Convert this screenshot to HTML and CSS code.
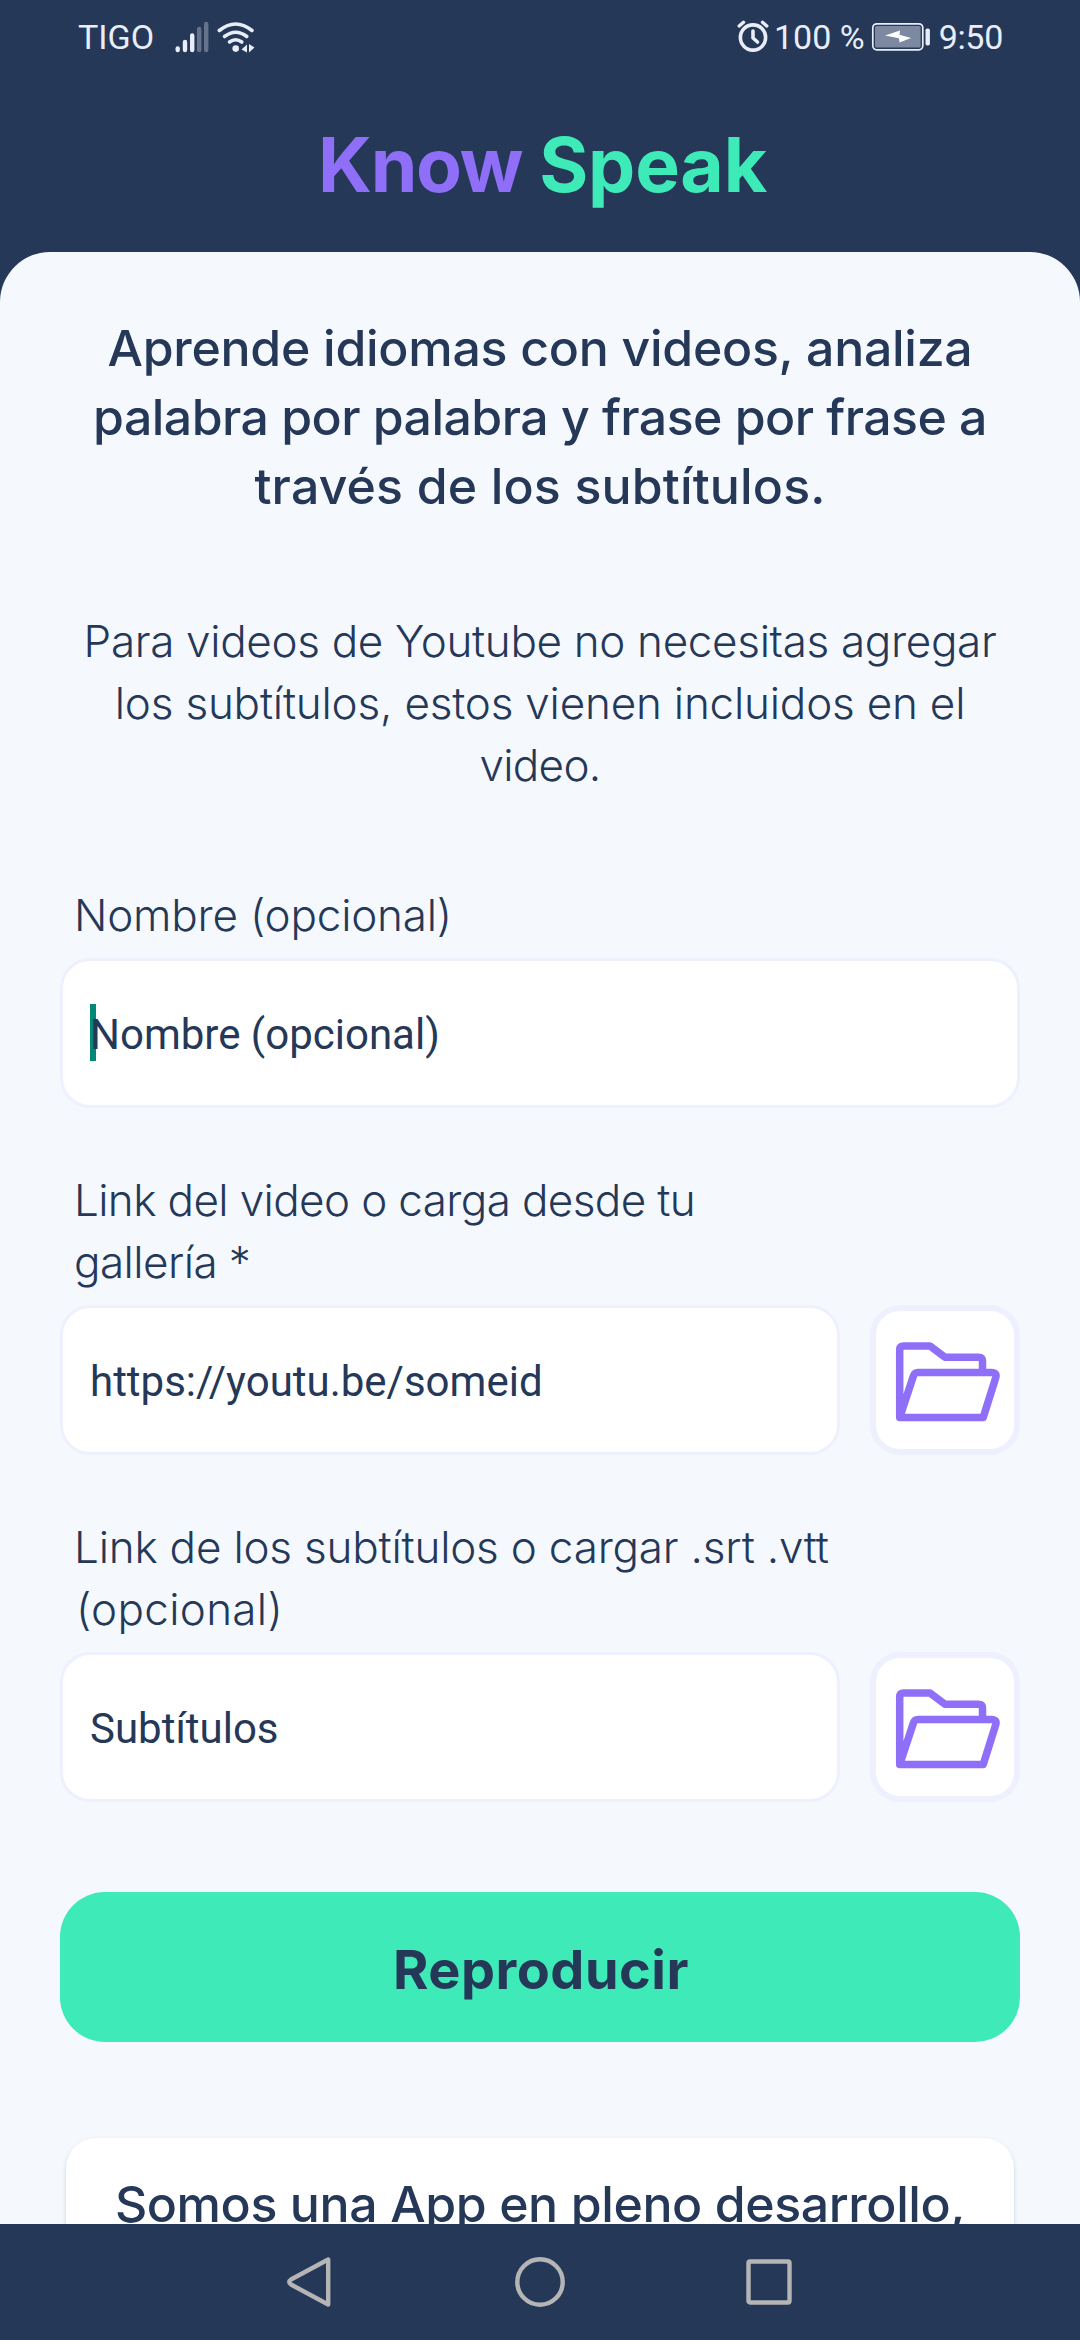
FILE: index.html
```
<!DOCTYPE html>
<html lang="es">
<head>
<meta charset="utf-8">
<title>Know Speak</title>
<link rel="stylesheet" href="styles.css">
</head>
<body>
<div class="screen">
  <div class="status">
    <span class="carrier">TIGO</span>
    <svg class="signal" width="42" height="32" viewBox="174 20 42 32" aria-hidden="true">
      <g stroke="currentColor" stroke-width="4.4" stroke-linecap="round">
        <path d="M177.7 47.5V49M185 41V49M192.2 34.5V49"/>
        <path d="M199.2 28V49M206.2 23V49" opacity=".32"/>
      </g>
    </svg>
    <svg class="wifi" width="40" height="32" viewBox="216 20 40 32" fill="none" aria-hidden="true">
      <g stroke="currentColor" stroke-width="3.6" stroke-linecap="round">
        <path d="M219.3 29.5Q235.6 16.5 252 29.5"/>
        <path d="M224.5 35.5Q235.6 27 246.8 35.5"/>
        <path d="M229.5 41Q235.6 36.5 241.8 41"/>
      </g>
      <circle cx="235.7" cy="47.6" r="3.3" fill="currentColor"/>
      <path d="M241.5 48.5L247 43.5V51.5ZM249 43L254.5 46.5L249 51.5Z" fill="currentColor"/>
    </svg>
    <span class="grow"></span>
    <svg class="alarm" width="32" height="34" viewBox="735 20 32 34" fill="none" stroke="currentColor" stroke-linecap="round" aria-hidden="true">
      <circle cx="751" cy="37.5" r="12.6" stroke-width="3.6"/>
      <path d="M751 31V38L755.5 42" stroke-width="3.6" stroke-linejoin="round"/>
      <path d="M737.2 26L741.5 22.3M764.8 26L760.5 22.3" stroke-width="3.4"/>
    </svg>
    <span class="percent">100 %</span>
    <svg class="battery" width="60" height="30" viewBox="870 22 60 30" aria-hidden="true">
      <rect x="871.8" y="23.8" width="50" height="26" rx="4" fill="none" stroke="currentColor" stroke-width="1.7"/>
      <rect x="874" y="26" width="45.6" height="21.6" rx="1.5" fill="currentColor" opacity=".45"/>
      <path d="M884 35.5L899 30.5L898.5 34.7L910 38L898.5 42.5L898 38.3Z" fill="#fff"/>
      <rect x="924.5" y="28.5" width="4.4" height="17" rx="1.8" fill="currentColor"/>
    </svg>
    <span class="clock">9:50</span>
  </div>

  <h1 class="brand"><span class="know">Know</span><span class="speak">Speak</span></h1>

  <main class="panel">
    <p class="intro"><span class="i1">Aprende idiomas con videos, analiza</span><span class="i2">palabra por palabra y frase por frase a</span><span class="i3">través de los subtítulos.</span></p>
    <p class="note"><span class="n1">Para videos de Youtube no necesitas agregar</span><span class="n2">los subtítulos, estos vienen incluidos en el</span><span class="n3">video.</span></p>

    <label class="label"><span class="n2">Nombre (opcional)</span></label>
    <div class="row">
      <div class="input"><i class="caret"></i>Nombre (opcional)</div>
    </div>

    <label class="label spaced"><span class="l2">Link del video o carga desde tu</span><span class="l3">gallería *</span></label>
    <div class="row">
      <div class="input">https://youtu.be/someid</div>
      <div class="browse">
        <svg class="folder" viewBox="0 0 150 150" aria-hidden="true"><path d="M29.7 112.5V45Q29.7 41 33.7 41H60L75 52.3H108.5Q112.5 52.3 112.5 56.3V67.5M29.7 112.5L43.4 71Q44.5 67.5 48 67.5H121.5Q127.2 67.5 125.8 72.5L113.2 112.5Z"/></svg>
      </div>
    </div>

    <label class="label spaced"><span class="n2">Link de los subtítulos o cargar .srt .vtt</span><span class="l4">(opcional)</span></label>
    <div class="row">
      <div class="input">Subtítulos</div>
      <div class="browse">
        <svg class="folder" viewBox="0 0 150 150" aria-hidden="true"><path d="M29.7 112.5V45Q29.7 41 33.7 41H60L75 52.3H108.5Q112.5 52.3 112.5 56.3V67.5M29.7 112.5L43.4 71Q44.5 67.5 48 67.5H121.5Q127.2 67.5 125.8 72.5L113.2 112.5Z"/></svg>
      </div>
    </div>

    <div class="play">Reproducir</div>

    <div class="card">Somos una App en pleno desarrollo,</div>
  </main>

  <nav class="nav">
    <svg width="52" height="56" viewBox="0 0 52 56" aria-hidden="true"><path d="M43.2 5.5V50.5L6 30.5Q2.5 28 6 25.5Z"/></svg>
    <svg width="52" height="56" viewBox="0 0 52 56" aria-hidden="true"><circle cx="26" cy="28" r="22.7"/></svg>
    <svg width="52" height="56" viewBox="0 0 52 56" aria-hidden="true"><rect x="5.5" y="7.5" width="41" height="41" rx="1.5"/></svg>
  </nav>
</div>
</body>
</html>
```
FILE: styles.css
```
* { box-sizing: border-box; }

body {
  margin: 0;
  background: #253858;
  color: #253858;
  font-family: "Inter", sans-serif;
}

.screen {
  width: 1080px;
  height: 2340px;
  display: flex;
  flex-direction: column;
  overflow: hidden;
  background: #253858;
}

/* Status bar */
.status {
  height: 74px;
  flex: none;
  display: flex;
  align-items: center;
  padding: 0 77px 0 78px;
  color: #e8edf8;
  font: 400 34px/74px "Roboto", sans-serif;
}
.grow { flex: 1; }
.signal { margin-left: 20px; flex: none; }
.alarm { margin-right: 5px; }
.battery { margin: 0 8px 0 6px; }
.clock { letter-spacing: -.3px; }

.brand {
  height: 178px;
  flex: none;
  margin: 0;
  padding: 2px 0 0 5px;
  display: flex;
  justify-content: center;
  gap: 17px;
  font-size: 75px;
  line-height: 178px;
  font-weight: 700;
}
.know { color: #8f6ff8; letter-spacing: -1.3px; }
.speak { color: #3eebb8; letter-spacing: -.2px; }

/* Content sheet */
.panel {
  flex: 1;
  min-height: 0;
  overflow: hidden;
  background: #f5f9fe;
  border-radius: 50px 50px 0 0;
  padding: 62px 60px 0;
}

.intro, .note { margin: 0; text-align: center; white-space: nowrap; }
.intro span, .note span, .label span { display: block; }
.intro { font-size: 50px; line-height: 69px; font-weight: 500; }
.note { margin-top: 89px; font-size: 44px; line-height: 62px; font-weight: 300; }
.i1 { letter-spacing: -.28px; }
.i2 { letter-spacing: -.55px; }
.i3 { letter-spacing: .15px; }
.n1 { letter-spacing: -.33px; }
.n2 { letter-spacing: -.2px; }
.n3 { letter-spacing: -.7px; }
.l2 { letter-spacing: -.62px; }
.l3 { letter-spacing: -.55px; }
.l4 { letter-spacing: .3px; padding-left: 2px; }

.label {
  display: block;
  margin: 88px 0 12px;
  padding-left: 14px;
  font-size: 44px;
  line-height: 62px;
  font-weight: 300;
  white-space: nowrap;
}
.label.spaced { margin-top: 61px; }

.row { display: flex; gap: 30px; }
.input {
  position: relative;
  z-index: 0;
  flex: 1;
  height: 150px;
  padding: 2px 27px 0;
  border: 3px solid #eef0fd;
  border-radius: 30px;
  background: #fff;
  font: 400 42px/144px "Roboto", sans-serif;
}
.caret {
  position: absolute;
  left: 27px;
  top: 43px;
  width: 6px;
  height: 57px;
  background: #048776;
  z-index: -1;
}
.browse {
  width: 150px;
  height: 150px;
  border: 6px solid #eef0fd;
  border-radius: 30px;
  background: #fff;
}
.folder {
  display: block;
  width: 150px;
  height: 150px;
  margin: -6px;
  fill: none;
  stroke: #8f6ff8;
  stroke-width: 7.5;
  stroke-linejoin: round;
}

.play {
  height: 150px;
  margin-top: 90px;
  padding: 3px 0 0 2px;
  border-radius: 45px;
  background: #3eebb8;
  text-align: center;
  font-size: 54px;
  line-height: 150px;
  font-weight: 700;
  letter-spacing: .5px;
}

.card {
  height: 300px;
  margin: 96px 6px 0;
  padding-top: 32px;
  border-radius: 30px;
  background: #fff;
  box-shadow: 0 2px 4px rgba(37, 56, 88, .2);
  text-align: center;
  font-size: 50px;
  line-height: 69px;
  font-weight: 500;
  letter-spacing: -.4px;
  white-space: nowrap;
}

/* System navigation */
.nav {
  height: 116px;
  flex: none;
  display: flex;
  justify-content: center;
  align-items: center;
  gap: 177px;
  background: #253858;
}
.nav svg { fill: none; stroke: #b5b5b5; stroke-width: 4.4; stroke-linejoin: round; }
```
